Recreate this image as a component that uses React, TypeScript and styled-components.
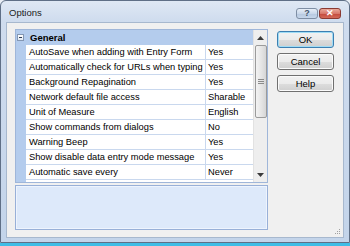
import React from "react";
import styled, { createGlobalStyle } from "styled-components";

const Global = createGlobalStyle`
  html, body { margin: 0; padding: 0; background: #e9eef5; }
  body { font-family: "Liberation Sans", Arial, sans-serif; }
  * { box-sizing: border-box; }
`;

const Page = styled.div`
  width: 350px;
  height: 246px;
  display: flex;
  flex-direction: column;
  overflow: hidden;
`;

const Window = styled.div`
  width: 350px;
  height: 243px;
  display: flex;
  flex-direction: column;
  border: 1px solid #5f6f86;
  border-radius: 6px 6px 0 0;
  background: linear-gradient(180deg, #dfe8f4 0px, #cfdcee 20px, #c3d4ea 100%);
`;

const DesktopStrip = styled.div`
  height: 3px;
  background: #3fbde6;
`;

const TitleBar = styled.div`
  height: 21px;
  display: flex;
  align-items: center;
  padding: 0 8px 0 8px;
`;

const Title = styled.div`
  flex: 1;
  font-size: 9.5px;
  color: #1b1b1b;
  padding-top: 2px;
`;

const CaptionButtons = styled.div`
  display: flex;
  gap: 1px;
  margin-top: 4px;
`;

const CaptionButton = styled.div<{ $close?: boolean }>`
  width: 22px;
  height: 11px;
  border-radius: 3px;
  border: 1px solid ${(p) => (p.$close ? "#8b3a32" : "#7e8ea4")};
  background: ${(p) =>
    p.$close
      ? "linear-gradient(180deg, #e9a99b 0%, #d8786a 50%, #c2483b 51%, #d46a58 100%)"
      : "linear-gradient(180deg, #e7eef7 0%, #cad8ea 50%, #b6c8df 51%, #c6d6ea 100%)"};
  display: flex;
  align-items: center;
  justify-content: center;
  color: ${(p) => (p.$close ? "#fff" : "#44556c")};
  font-size: 9px;
  font-weight: bold;
  line-height: 1;
`;

const Content = styled.div`
  flex: 1;
  margin: 0 5px 4px 5px;
  background: #f0f0f0;
  border: 1px solid #a7b8ce;
  display: flex;
  padding: 6px 0 0 8px;
  gap: 9px;
  position: relative;
`;

const LeftCol = styled.div`
  width: 253px;
  display: flex;
  flex-direction: column;
  gap: 2px;
`;

const Grid = styled.div`
  height: 154px;
  border: 1px solid #9fb6d9;
  background: #fff;
  display: flex;
`;

const Margin = styled.div`
  width: 10px;
  background: #b4cced;
`;

const Rows = styled.div`
  width: 227px;
  display: flex;
  flex-direction: column;
`;

const Category = styled.div`
  height: 15px;
  margin-left: -10px;
  width: 237px;
  background: #b4cced;
  display: flex;
  align-items: center;
  font-size: 9.5px;
  font-weight: bold;
  color: #000;
`;

const Toggle = styled.div`
  width: 7px;
  height: 7px;
  margin: 0 6px 0 1px;
  border: 1px solid #8497b3;
  background: linear-gradient(180deg, #ffffff, #dfe7f2);
  position: relative;
  &::after {
    content: "";
    position: absolute;
    left: 1px;
    right: 1px;
    top: 2px;
    height: 1px;
    background: #2d3d55;
  }
`;

const Row = styled.div`
  height: 15px;
  display: flex;
  border-bottom: 1px solid #c9d8ee;
  font-size: 9.3px;
  color: #000;
`;

const Name = styled.div`
  width: 180px;
  padding-left: 3px;
  line-height: 14px;
  white-space: nowrap;
  overflow: hidden;
  border-right: 1px solid #c9d8ee;
`;

const Value = styled.div`
  flex: 1;
  padding-left: 2px;
  line-height: 14px;
  white-space: nowrap;
`;

const ScrollBar = styled.div`
  width: 14px;
  background: #eeeeee;
  border-left: 1px solid #e2e2e2;
  display: flex;
  flex-direction: column;
  align-items: center;
`;

const Arrow = styled.div`
  height: 15px;
  width: 14px;
  display: flex;
  align-items: center;
  justify-content: center;
`;

const Thumb = styled.div`
  width: 12px;
  height: 73px;
  border: 1px solid #9b9b9b;
  border-radius: 2px;
  background: linear-gradient(90deg, #f3f3f3 0%, #e6e6e6 50%, #d6d6d6 100%);
  display: flex;
  align-items: center;
  justify-content: center;
`;

const Track = styled.div`
  flex: 1;
`;

const Description = styled.div`
  height: 45px;
  border: 1px solid #98b0d8;
  background: #dde9fa;
  box-shadow: inset 0 0 0 1px #eef4fd;
`;

const Buttons = styled.div`
  width: 57px;
  display: flex;
  flex-direction: column;
  gap: 5px;
  padding-top: 2px;
`;

const Button = styled.div<{ $default?: boolean }>`
  height: 17px;
  border-radius: 3px;
  border: 1px solid ${(p) => (p.$default ? "#3c7fb1" : "#707070")};
  background: linear-gradient(180deg, #f2f2f2 0%, #ebebeb 50%, #dddddd 51%, #cfcfcf 100%);
  box-shadow: ${(p) => (p.$default ? "inset 0 0 0 1px #9fdcf5" : "inset 0 0 0 1px #fbfbfb")};
  display: flex;
  align-items: center;
  justify-content: center;
  font-size: 9.5px;
  color: #000;
`;

const Grip = styled.svg`
  position: absolute;
  right: 2px;
  bottom: 2px;
`;

const rows: [string, string][] = [
  ["AutoSave when adding with Entry Form", "Yes"],
  ["Automatically check for URLs when typing", "Yes"],
  ["Background Repagination", "Yes"],
  ["Network default file access", "Sharable"],
  ["Unit of Measure", "English"],
  ["Show commands from dialogs", "No"],
  ["Warning Beep", "Yes"],
  ["Show disable data entry mode message", "Yes"],
  ["Automatic save every", "Never"],
];

export default function App() {
  return (
    <Page>
      <Global />
      <Window>
        <TitleBar>
          <Title>Options</Title>
          <CaptionButtons>
            <CaptionButton>?</CaptionButton>
            <CaptionButton $close>✕</CaptionButton>
          </CaptionButtons>
        </TitleBar>
        <Content>
          <LeftCol>
            <Grid>
              <Margin />
              <Rows>
                <Category>
                  <Toggle />
                  General
                </Category>
                {rows.map(([n, v]) => (
                  <Row key={n}>
                    <Name>{n}</Name>
                    <Value>{v}</Value>
                  </Row>
                ))}
              </Rows>
              <ScrollBar>
                <Arrow>
                  <svg width="7" height="4" viewBox="0 0 7 4">
                    <path d="M0 4 L3.5 0 L7 4 Z" fill="#3a3a3a" />
                  </svg>
                </Arrow>
                <Thumb>
                  <svg width="6" height="6" viewBox="0 0 6 6">
                    <path d="M0 0.5h6M0 2.5h6M0 4.5h6" stroke="#8a8a8a" strokeWidth="1" />
                  </svg>
                </Thumb>
                <Track />
                <Arrow>
                  <svg width="7" height="4" viewBox="0 0 7 4">
                    <path d="M0 0 L7 0 L3.5 4 Z" fill="#3a3a3a" />
                  </svg>
                </Arrow>
              </ScrollBar>
            </Grid>
            <Description />
          </LeftCol>
          <Buttons>
            <Button $default>OK</Button>
            <Button>Cancel</Button>
            <Button>Help</Button>
          </Buttons>
          <Grip width="6" height="6" viewBox="0 0 6 6">
            <rect x="4" y="0" width="1" height="1" fill="#a0a0a0" />
            <rect x="2" y="2" width="1" height="1" fill="#a0a0a0" />
            <rect x="4" y="2" width="1" height="1" fill="#a0a0a0" />
            <rect x="0" y="4" width="1" height="1" fill="#a0a0a0" />
            <rect x="2" y="4" width="1" height="1" fill="#a0a0a0" />
            <rect x="4" y="4" width="1" height="1" fill="#a0a0a0" />
          </Grip>
        </Content>
      </Window>
      <DesktopStrip />
    </Page>
  );
}
